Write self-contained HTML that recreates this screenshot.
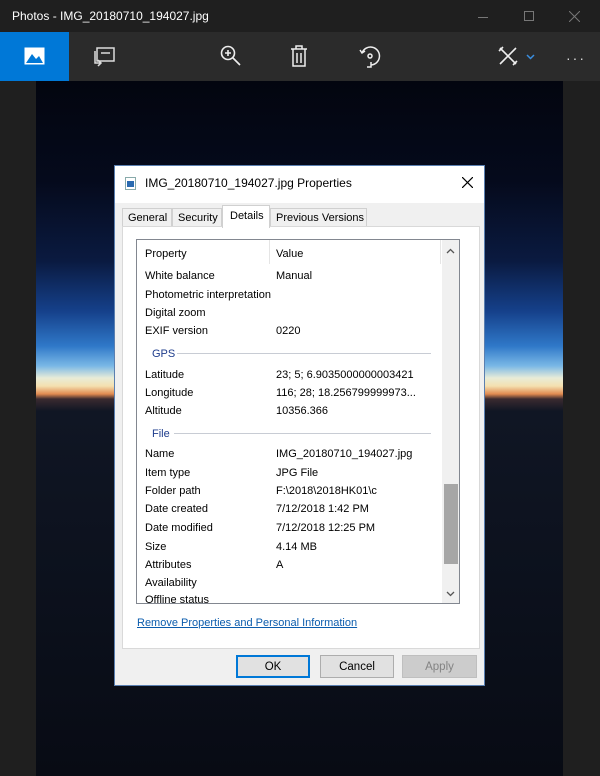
<!DOCTYPE html>
<html><head><style>
*{margin:0;padding:0;box-sizing:border-box}
body{width:600px;height:776px;background:#1f1f1f;font-family:"Liberation Sans",sans-serif;position:relative;overflow:hidden}
.abs{position:absolute}
#title{left:0;top:0;width:600px;height:32px;background:#1f1f1f;color:#fff;font-size:12px}
#tb{left:0;top:32px;width:600px;height:49px;background:#2b2b2b}
#img{left:36px;top:81px;width:527px;height:695px;background:linear-gradient(to bottom,#03050f 0px,#050a1c 100px,#0a1a40 180px,#15408a 230px,#2f78c8 265px,#7ab8e6 285px,#e8ecd8 297px,#f4e0b0 305px,#e08a50 313px,#3a2a30 318px,#101624 330px,#0c111d 500px,#080b14 695px)}
#dlg{left:114px;top:165px;width:371px;height:521px;background:#f0f0f0;border:1px solid #5a7fb0;font-size:11px;color:#000}
.row{position:absolute;left:30px;font-size:11px;white-space:nowrap;width:300px;margin-top:2px}
.val{position:absolute;left:131px}
.btn{position:absolute;top:489px;height:23px;background:#e1e1e1;border:1px solid #adadad;text-align:center;line-height:22px;font-size:11.5px}
.tab{position:absolute;top:42px;height:19px;border:1px solid #d0d0d0;background:#f0f0f0;padding:3px 0 0 5px;font-size:11px;white-space:nowrap}
</style></head><body>
<div id="title" class="abs"><span class="abs" style="left:12px;top:9px">Photos - IMG_20180710_194027.jpg</span>
<div class="abs" style="left:478px;top:17px;width:10px;height:1px;background:#777"></div>
<div class="abs" style="left:524px;top:11px;width:10px;height:10px;border:1px solid #777"></div>
<svg class="abs" style="left:569px;top:11px" width="11" height="11"><path d="M0 0L11 11M11 0L0 11" stroke="#777" stroke-width="1"/></svg>
</div>
<div id="tb" class="abs">
<div class="abs" style="left:0;top:0;width:69px;height:49px;background:#0078d7"></div>
<svg class="abs" style="left:24px;top:15px" width="21" height="18"><rect x="0.5" y="0.5" width="20" height="17" fill="#fff"/><path d="M2 16L8 7L12 12L15 9L19 16Z" fill="#0078d7"/></svg>
<svg class="abs" style="left:92px;top:15px" width="24" height="20" fill="none" stroke="#ddd" stroke-width="1.5"><rect x="5" y="1" width="17" height="13"/><path d="M9 6h9M3 4v12h6M6 13l3 3-3 3"/></svg>
<svg class="abs" style="left:220px;top:13px" width="22" height="22" fill="none" stroke="#eee" stroke-width="1.6"><circle cx="8" cy="8" r="6.5"/><path d="M8 5v6M5 8h6M13 13l7 7"/></svg>
<svg class="abs" style="left:290px;top:13px" width="18" height="22" fill="none" stroke="#eee" stroke-width="1.5"><path d="M1 4h16M6 4V1h6v3M3 4v17h12V4M7 8v10M11 8v10"/></svg>
<svg class="abs" style="left:359px;top:13px" width="22" height="24" fill="none" stroke="#eee" stroke-width="1.5"><path d="M3 8A9 9 0 1 1 12 20"/><circle cx="11" cy="11" r="2"/><path d="M1 5l2 3 3-2M12 17v5h-4"/></svg>
<svg class="abs" style="left:497px;top:13px" width="22" height="22" fill="none" stroke="#eee" stroke-width="1.6"><path d="M3 3l16 16M19 3L3 19M2 6l4-4M16 20l4-4"/></svg>
<svg class="abs" style="left:526px;top:22px" width="9" height="6"><path d="M1 1l3.5 3.5L8 1" stroke="#3a8ee0" stroke-width="1.5" fill="none"/></svg>
<div class="abs" style="left:566px;top:18px;color:#ddd;font-size:14px;letter-spacing:2px">···</div>
</div>
<div id="img" class="abs"></div>
<div id="dlg" class="abs">
<div class="abs" style="left:0;top:0;width:369px;height:37px;background:#fff"></div>
<svg class="abs" style="left:10px;top:11px" width="11" height="13"><rect x="0.5" y="0.5" width="10" height="12" fill="#fff" stroke="#8aa"/><rect x="2" y="4" width="7" height="6" fill="#2a6ab0"/></svg>
<span class="abs" style="left:30px;top:10px;font-size:12px">IMG_20180710_194027.jpg Properties</span>
<svg class="abs" style="left:347px;top:11px" width="11" height="11"><path d="M0 0L11 11M11 0L0 11" stroke="#000" stroke-width="1.2"/></svg>
<div class="tab" style="left:7px;width:50px">General</div>
<div class="tab" style="left:57px;width:50px">Security</div>
<div class="tab" style="left:107px;top:39px;width:48px;height:23px;border-bottom:none;background:#fff;padding:4px 0 0 7px;z-index:2">Details</div>
<div class="tab" style="left:155px;width:97px">Previous Versions</div>
<div class="abs" style="left:7px;top:60px;width:358px;height:423px;background:#fff;border:1px solid #d9d9d9"></div>
<div class="abs" style="left:21px;top:73px;width:324px;height:365px;border:1px solid #828790;background:#fff;overflow:hidden">
<div class="abs" style="left:132px;top:0;width:1px;height:24px;background:#e5e5e5"></div>
<div class="abs" style="left:303px;top:0;width:1px;height:24px;background:#e5e5e5"></div>
<div class="abs" style="left:305px;top:0;width:18px;height:363px;background:#f0f0f0"></div>
<div class="abs" style="left:307px;top:244px;width:14px;height:80px;background:#a6a6a6"></div>
<svg class="abs" style="left:309px;top:8px" width="9" height="6"><path d="M1 5l3.5-3.5L8 5" stroke="#555" stroke-width="1.3" fill="none"/></svg>
<svg class="abs" style="left:309px;top:351px" width="9" height="6"><path d="M1 1l3.5 3.5L8 1" stroke="#555" stroke-width="1.3" fill="none"/></svg>
</div>
<div class="row" style="top:80px">Property<span class="val">Value</span></div>
<div class="row" style="top:102px">White balance<span class="val">Manual</span></div>
<div class="row" style="top:121px">Photometric interpretation</div>
<div class="row" style="top:139px">Digital zoom</div>
<div class="row" style="top:157px">EXIF version<span class="val">0220</span></div>
<div class="row" style="top:180px;left:37px;color:#1e3c8c">GPS</div>
<div class="abs" style="left:62px;top:187px;width:254px;height:1px;background:#c8ccd4"></div>
<div class="row" style="top:201px">Latitude<span class="val">23; 5; 6.9035000000003421</span></div>
<div class="row" style="top:219px">Longitude<span class="val">116; 28; 18.256799999973...</span></div>
<div class="row" style="top:237px">Altitude<span class="val">10356.366</span></div>
<div class="row" style="top:260px;left:37px;color:#1e3c8c">File</div>
<div class="abs" style="left:59px;top:267px;width:257px;height:1px;background:#c8ccd4"></div>
<div class="row" style="top:280px">Name<span class="val">IMG_20180710_194027.jpg</span></div>
<div class="row" style="top:299px">Item type<span class="val">JPG File</span></div>
<div class="row" style="top:317px">Folder path<span class="val">F:\2018\2018HK01\c</span></div>
<div class="row" style="top:335px">Date created<span class="val">7/12/2018 1:42 PM</span></div>
<div class="row" style="top:354px">Date modified<span class="val">7/12/2018 12:25 PM</span></div>
<div class="row" style="top:373px">Size<span class="val">4.14 MB</span></div>
<div class="row" style="top:391px">Attributes<span class="val">A</span></div>
<div class="row" style="top:409px">Availability</div>
<div class="abs" style="left:22px;top:426px;width:282px;height:11px;overflow:hidden"><div class="row" style="left:8px;top:0">Offline status</div></div>
<div class="abs" style="left:22px;top:451px;color:#0b5cad;text-decoration:underline;font-size:11px">Remove Properties and Personal Information</div>
<div class="btn" style="left:121px;width:74px;border:1px solid #0078d7;box-shadow:inset 0 0 0 1px #0078d7">OK</div>
<div class="btn" style="left:205px;width:74px">Cancel</div>
<div class="btn" style="left:287px;width:75px;background:#ccc;border-color:#bfbfbf;color:#838383">Apply</div>
</div>
</body></html>
